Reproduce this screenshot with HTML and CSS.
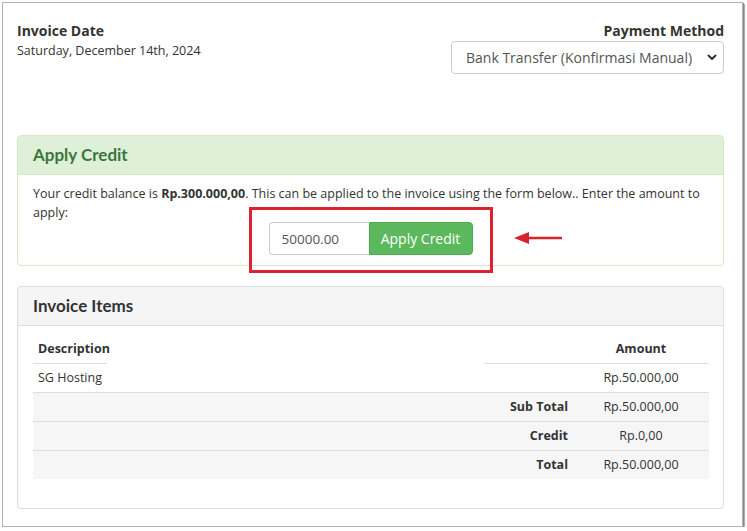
FILE: index.html
```html
<!DOCTYPE html>
<html lang="en">
<head>
    <meta charset="UTF-8">
    <meta name="viewport" content="width=device-width, initial-scale=1.0">
    <title>Invoice - Apply Credit</title>
    <link rel="stylesheet" href="styles.css">
</head>
<body>

    <div class="frame">

        <div class="invoice-head">
            <div class="invoice-date">
                <strong>Invoice Date</strong>
                <span>Saturday, December 14th, 2024</span>
            </div>
            <div class="payment-method">
                <strong>Payment Method</strong>
                <div class="select-wrap">
                    <select class="gateway">
                        <option>Bank Transfer (Konfirmasi Manual)</option>
                    </select>
                    <svg class="chevron" width="10" height="7" viewBox="0 0 10 7">
                        <path d="M1.5 1.5 L5 5 L8.5 1.5" fill="none" stroke="#333" stroke-width="2" stroke-linecap="round" stroke-linejoin="round"/>
                    </svg>
                </div>
            </div>
        </div>

        <div class="panel panel-success">
            <div class="panel-heading">Apply Credit</div>
            <div class="panel-body">
                <p class="credit-text">Your credit balance is <strong>Rp.300.000,00</strong>. This can be applied to the invoice using the form below.. Enter the amount to apply:</p>
                <div class="credit-form">
                    <div class="input-group">
                        <input type="text" class="amount" value="50000.00">
                        <button class="btn-apply">Apply Credit</button>
                        <!-- annotation -->
                        <span class="mark-box"></span>
                        <svg class="mark-arrow" width="50" height="14" viewBox="0 0 50 14">
                            <line x1="12" y1="7" x2="48" y2="7" stroke="#d7232b" stroke-width="2.5"/>
                            <polygon points="0,7 15,1 15,13" fill="#d7232b"/>
                        </svg>
                    </div>
                </div>
            </div>
        </div>

        <div class="panel panel-default">
            <div class="panel-heading">Invoice Items</div>
            <div class="panel-body">
                <table class="items">
                    <colgroup>
                        <col style="width:73px">
                        <col style="width:378px">
                        <col style="width:89px">
                        <col style="width:136px">
                    </colgroup>
                    <thead>
                        <tr>
                            <th class="desc">Description</th>
                            <th class="gap"></th>
                            <th class="ruled"></th>
                            <th class="ruled amt">Amount</th>
                        </tr>
                    </thead>
                    <tbody>
                        <tr>
                            <td>SG Hosting</td>
                            <td></td>
                            <td></td>
                            <td class="amt">Rp.50.000,00</td>
                        </tr>
                        <tr class="sum">
                            <td colspan="3" class="label">Sub Total</td>
                            <td class="amt">Rp.50.000,00</td>
                        </tr>
                        <tr class="sum">
                            <td colspan="3" class="label">Credit</td>
                            <td class="amt">Rp.0,00</td>
                        </tr>
                        <tr class="sum">
                            <td colspan="3" class="label">Total</td>
                            <td class="amt">Rp.50.000,00</td>
                        </tr>
                    </tbody>
                </table>
            </div>
        </div>

    </div>

</body>
</html>
```

FILE: styles.css
```css
* {
    box-sizing: border-box;
}

body {
    margin: 0;
    background: #fff;
    font-family: 'Open Sans', 'Liberation Sans', sans-serif;
    font-size: 12.5px;
    color: #333;
}

.frame {
    margin: 2px 0 0 2px;
    width: 741px;
    height: 525px;
    border: 1px solid #b4b4b4;
    box-shadow: 1px 1px 0 #8a8a8a, 2px 2px 1px #b0b0b0;
    padding: 18px 18px 0 14px;
}

/* top */
.invoice-head {
    display: flex;
    justify-content: space-between;
}

.invoice-date,
.payment-method {
    display: flex;
    flex-direction: column;
    line-height: 20px;
}

.payment-method {
    align-items: flex-end;
}

.invoice-head strong {
    font-size: 14px;
    font-weight: 700;
}

.select-wrap {
    position: relative;
}

.gateway {
    appearance: none;
    -webkit-appearance: none;
    width: 273px;
    height: 33px;
    border: 1px solid #ccc;
    border-radius: 4px;
    background: #fff;
    padding: 0 14px;
    font-family: 'Open Sans', sans-serif;
    font-size: 14px;
    color: #555;
}

.chevron {
    position: absolute;
    right: 7px;
    top: 13px;
}

/* panels */
.panel {
    border: 1px solid #ddd;
    border-radius: 4px;
    background: #fff;
}

.panel-heading {
    padding: 10px 15px;
    font-family: 'Lato', sans-serif;
    font-size: 17px;
    font-weight: 700;
    line-height: 18px;
    border-bottom: 1px solid #ddd;
    border-radius: 3px 3px 0 0;
}

.panel-success {
    margin-top: 61px;
    border-color: #d6e9c6;
}

.panel-success .panel-heading {
    background: #dff0d8;
    color: #3c763d;
    border-bottom-color: #d6e9c6;
}

.panel-success .panel-body {
    padding: 9px 15px 10px;
}

.credit-text {
    margin: 0;
    line-height: 19px;
}

.credit-form {
    display: flex;
    justify-content: center;
}

.input-group {
    position: relative;
    display: flex;
}

.amount {
    width: 100px;
    height: 33px;
    border: 1px solid #ccc;
    border-right: none;
    border-radius: 4px 0 0 4px;
    padding: 0 12px;
    font-family: 'Open Sans', sans-serif;
    font-size: 13.5px;
    color: #555;
}

.btn-apply {
    width: 104px;
    height: 33px;
    border: 1px solid #4cae4c;
    border-radius: 0 4px 4px 0;
    background: #5cb85c;
    color: #fff;
    font-family: 'Open Sans', sans-serif;
    font-size: 14px;
    padding: 0;
}

.mark-box {
    position: absolute;
    left: -20px;
    top: -15px;
    width: 244px;
    height: 66px;
    border: 3px solid #dc2430;
}

.mark-arrow {
    position: absolute;
    left: 245px;
    top: 9px;
}

.panel-default {
    margin-top: 20px;
}

.panel-default .panel-heading {
    background: #f5f5f5;
    color: #333;
    font-weight: 700;
}

.panel-default .panel-body {
    padding: 9px 15px 29px;
}

/* table */
.items {
    width: 676px;
    border-collapse: collapse;
    table-layout: fixed;
}

.items th,
.items td {
    padding: 5px;
    line-height: 18px;
    text-align: left;
    white-space: nowrap;
}

.items th {
    font-weight: 700;
}

.items th.desc,
.items th.ruled {
    border-bottom: 1px solid #ddd;
}

.items .amt {
    text-align: center;
}

.items tr.sum td {
    background: #f6f6f6;
    border-top: 1px solid #ddd;
}

.items td.label {
    text-align: right;
    font-weight: 700;
}
```
